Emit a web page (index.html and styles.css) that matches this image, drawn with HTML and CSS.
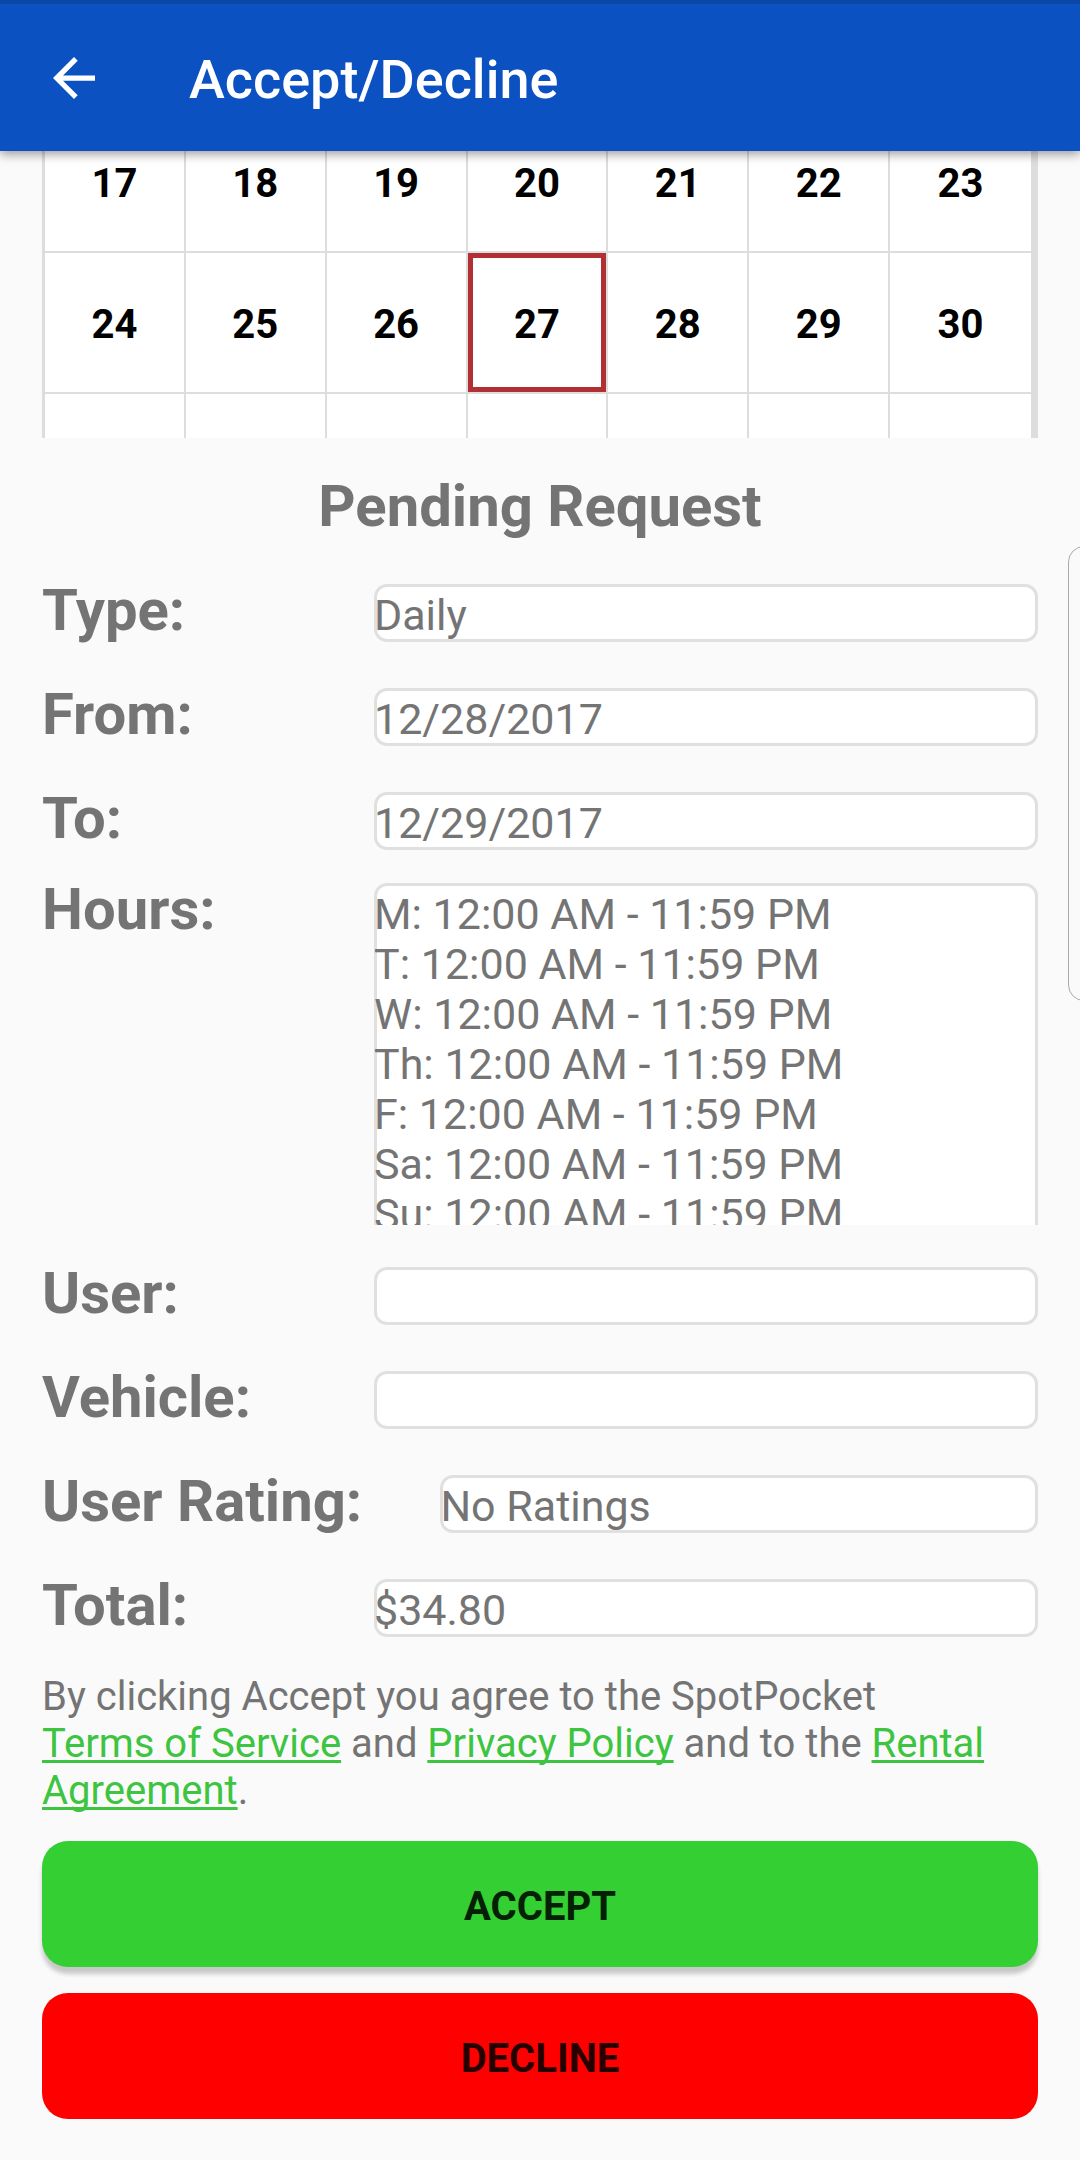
FILE: index.html
```html
<!DOCTYPE html>
<html lang="en">
<head>
<meta charset="utf-8">
<meta name="viewport" content="width=device-width">
<title>Accept/Decline</title>
<link rel="stylesheet" href="styles.css">
</head>
<body>
<header class="app-bar">
  <button class="back" type="button" aria-label="Back">
    <svg width="42" height="42" viewBox="0 0 16 16" aria-hidden="true"><path d="M16 7H3.83l5.59-5.59L8 0 0 8l8 8 1.41-1.41L3.83 9H16z" fill="currentColor"/></svg>
  </button>
  <h1 class="title">Accept/Decline</h1>
</header>

<main class="content">
  <div class="calendar">
    <table class="month">
      <tbody>
        <tr><td>17</td><td>18</td><td>19</td><td>20</td><td>21</td><td>22</td><td>23</td></tr>
        <tr><td>24</td><td>25</td><td>26</td><td class="today">27</td><td>28</td><td>29</td><td>30</td></tr>
        <tr><td></td><td></td><td></td><td></td><td></td><td></td><td></td></tr>
      </tbody>
    </table>
  </div>

  <h2 class="heading">Pending Request</h2>

  <form class="request">
    <div class="rows">
      <div class="row"><label for="type">Type:</label><input class="field" id="type" value="Daily" readonly></div>
      <div class="row"><label for="from">From:</label><input class="field" id="from" value="12/28/2017" readonly></div>
      <div class="row"><label for="to">To:</label><input class="field" id="to" value="12/29/2017" readonly></div>
    </div>
    <div class="row row-hours">
      <label for="hours">Hours:</label>
      <div class="hours-clip">
        <textarea class="field hours" id="hours" rows="7" readonly>M: 12:00 AM - 11:59 PM
T: 12:00 AM - 11:59 PM
W: 12:00 AM - 11:59 PM
Th: 12:00 AM - 11:59 PM
F: 12:00 AM - 11:59 PM
Sa: 12:00 AM - 11:59 PM
Su: 12:00 AM - 11:59 PM</textarea>
      </div>
    </div>
    <div class="rows">
      <div class="row"><label for="user">User:</label><input class="field" id="user" readonly></div>
      <div class="row"><label for="vehicle">Vehicle:</label><input class="field" id="vehicle" readonly></div>
      <div class="row row-wide"><label for="rating">User Rating:</label><input class="field" id="rating" value="No Ratings" readonly></div>
      <div class="row"><label for="total">Total:</label><input class="field" id="total" value="$34.80" readonly></div>
    </div>

    <p class="terms">By clicking Accept you agree to the SpotPocket<br><a href="#terms">Terms of Service</a> and <a href="#privacy">Privacy Policy</a> and to the <a href="#rental">Rental Agreement</a>.</p>

    <div class="actions">
      <button class="action accept" type="button">ACCEPT</button>
      <button class="action decline" type="button">DECLINE</button>
    </div>
  </form>
</main>
<div class="edge-handle"></div>
</body>
</html>
```

FILE: styles.css
```css
* {
  box-sizing: border-box;
}

body {
  margin: 0;
  background: #fafafa;
  color: #747474;
  font-family: Roboto, sans-serif;
  position: relative;
  overflow-x: hidden;
}

.app-bar {
  position: relative;
  z-index: 1;
  display: flex;
  align-items: center;
  gap: 94px;
  height: 151px;
  padding: 4px 53px 0;
  border-top: 4px solid #0a47a6;
  background: #0b51c1;
  color: #fff;
  box-shadow: 0 3px 10px rgba(0, 0, 0, 0.4);
}

.back {
  display: flex;
  padding: 0 0 4px;
  border: 0;
  background: none;
  color: inherit;
}

.title {
  margin: 0;
  font-size: 54px;
  font-weight: 500;
  line-height: 64px;
}

.content {
  padding: 0 42px 41px;
}

/* The month view is scrolled part-way under the app bar */
.calendar {
  height: 326px;
  margin-top: -39px;
  overflow: hidden;
}

.month {
  width: 100%;
  table-layout: fixed;
  border-collapse: separate;
  border-spacing: 0;
  border: solid #ddd;
  border-width: 0 7px 0 3px;
  background: #fff;
  color: #000;
  font-size: 40px;
  font-weight: 700;
  line-height: 48px;
  text-align: center;
}

.month td {
  height: 141px;
  padding: 4px 0 0;
  border: solid #ddd;
  border-width: 0 2px 2px 0;
}

.month td:last-child {
  border-right: 0;
}

.month .today {
  box-shadow: inset 0 0 0 5px #b22f34;
}

.heading {
  margin: 34px 0 36px;
  font-size: 58px;
  font-weight: 700;
  line-height: 68px;
  text-align: center;
}

.rows {
  display: grid;
  gap: 36px;
}

.row {
  display: grid;
  grid-template-columns: minmax(0, 1fr) minmax(0, 2fr);
  align-items: baseline;
  height: 68px;
}

.row-wide {
  grid-template-columns: minmax(0, 2fr) minmax(0, 3fr);
}

.row label {
  font-size: 58px;
  font-weight: 700;
  line-height: 68px;
}

.field {
  display: block;
  width: 100%;
  height: 58px;
  margin: 0;
  padding: 6px 0 2px;
  border: 0;
  border-radius: 13px;
  background: #fff;
  box-shadow: inset 0 0 0 3px #e0e0e0;
  color: inherit;
  font-family: inherit;
  font-size: 43px;
  line-height: 50px;
  outline: none;
}

.row-hours {
  height: auto;
  align-items: start;
  margin: 23px 0 34px;
}

.hours-clip {
  height: 342px;
  margin-top: 8px;
  overflow: hidden;
}

.hours {
  height: 364px;
  overflow: hidden;
  resize: none;
}

.terms {
  margin: 34px 0 27px;
  font-size: 40px;
  line-height: 47px;
}

.terms a {
  color: #3dc440;
  text-decoration: underline;
  text-decoration-thickness: 3px;
  text-decoration-skip-ink: none;
  text-underline-offset: 3px;
}

.actions {
  display: grid;
  gap: 26px;
}

.action {
  height: 126px;
  padding: 5px 0 0;
  border: 0;
  border-radius: 26px;
  font-family: inherit;
  font-size: 40px;
  font-weight: 700;
  line-height: 48px;
}

.accept {
  background: #33cf33;
  color: #052005;
  box-shadow: 0 7px 4px #c8c8c8;
}

.decline {
  background: #f00;
  color: #260000;
}

/* System edge-panel handle, partly off the right side of the screen */
.edge-handle {
  position: absolute;
  top: 546px;
  right: -20px;
  width: 32px;
  height: 455px;
  border: 1px solid #aaa;
  border-radius: 20px;
}
```
